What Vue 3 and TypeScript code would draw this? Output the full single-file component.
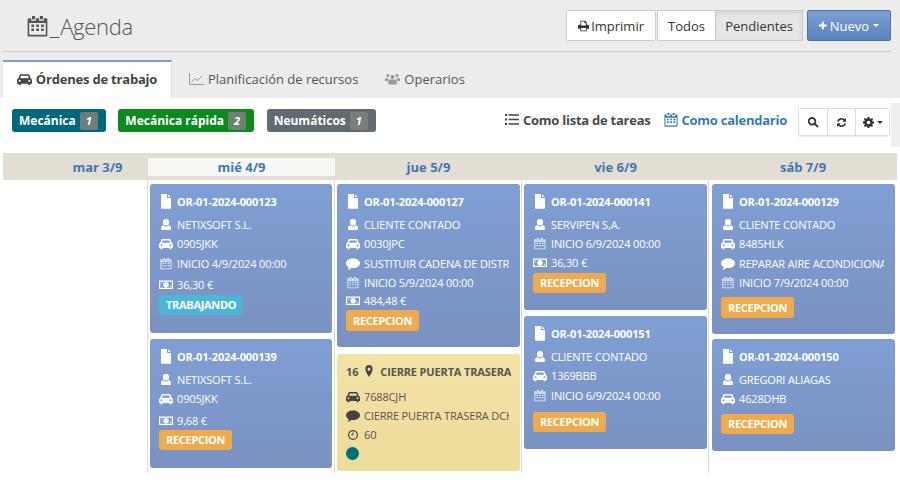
<script setup lang="ts">
type Line = { icon: string; text: string; gap?: number };
type Card = { id: string; h: number; lines: Line[]; state: string; stateTop?: number; tall?: boolean };
const icons: Record<string, string> = {
  user: 'M6 1a3 3 0 0 1 3 3.2A3 3 0 0 1 6 7.5a3 3 0 0 1-3-3.3A3 3 0 0 1 6 1zM3.2 7.2C4 8 5 8.400 6 8.400S8 8 8.800 7.200C10.400 7.400 11 8.800 11 10.500 11 11.500 10.300 12 9.500 12h-7C1.700 12 1 11.500 1 10.500 1 8.800 1.600 7.400 3.200 7.200z',
  car: 'M3.500 2h7c.6 0 1 .3 1.200.9L12.800 6c.7.3 1.200 1 1.200 1.800V11h-1.500v1.200h-2V11h-7v1.200h-2V11H0V7.800C0 7 .5 6.300 1.200 6L2.300 2.900C2.500 2.300 2.900 2 3.500 2zM3.700 3.400 3 5.800h8l-.7-2.400zM2.500 7.200a1 1 0 1 0 0 2 1 1 0 0 0 0-2zM11.500 7.200a1 1 0 1 0 0 2 1 1 0 0 0 0-2z',
  cal: 'M3 0h2v2H3zM8 0h2v2H8zM1 1.500h1.500V3h3V1.500h2V3h3V1.500H12a.8.8 0 0 1 .8.8v10a.8.8 0 0 1-.8.8H1a.8.8 0 0 1-.8-.8v-10a.8.8 0 0 1 .8-.8zM1.200 4.500V12h10.600V4.500zM2.600 5.500h1.700v1.500H2.600zM5.700 5.500h1.700v1.500H5.700zM8.800 5.500h1.700v1.500H8.800zM2.600 8h1.700v1.500H2.600zM5.700 8h1.700v1.500H5.700zM8.800 8h1.700v1.500H8.800z',
  money: 'M0 2.500h14v8.500H0zM1.200 3.700v6.100h11.600V3.700zM7 4a2.700 2.700 0 1 1 0 5.500A2.700 2.700 0 0 1 7 4zM2 4.700h1.600L2 6.200zM12 8.800h-1.600l1.600-1.500z',
  chat: 'M7 1.500c3.900 0 7 2.100 7 4.800s-3.100 4.800-7 4.800c-.6 0-1.200-.1-1.800-.2C4.200 11.900 3 12.500 1.500 12.800c.7-.8 1.200-1.600 1.300-2.500C1.100 9.400 0 8 0 6.300 0 3.600 3.100 1.500 7 1.500z',
  clock: 'M7 1a6 6 0 1 1 0 12A6 6 0 0 1 7 1zM7 2.500a4.500 4.500 0 1 0 0 9 4.500 4.500 0 0 0 0-9zM6.300 4h1.200v3.300H4.800V6.200h1.500z',
};
const boxes: Record<string, string> = {
  user: '-1 0 14 14',
  car: '0 0 14 14',
  cal: '-1.400 -1 16 16',
  money: '0 0 14 14',
  chat: '0 0 14 14',
  clock: '-1.400 -1.400 16.800 16.800',
};
const doc = 'M1 0h6v4h4v10a.7.7 0 0 1-.7.7H1.700A.7.7 0 0 1 1 14zM8 .3 10.700 3H8z';
const cols: Card[][] = [
  [],
  [
    { id: 'OR-01-2024-000123', h: 149, state: 'TRABAJANDO', stateTop: 1, lines: [
      { icon: 'user', text: 'NETIXSOFT S.L.' }, { icon: 'car', text: '0905JKK' },
      { icon: 'cal', text: 'INICIO 4/9/2024 00:00', gap: 1 }, { icon: 'money', text: '36,30 €', gap: 2 } ] },
    { id: 'OR-01-2024-000139', h: 129, state: 'RECEPCION', lines: [
      { icon: 'user', text: 'NETIXSOFT S.L.' }, { icon: 'car', text: '0905JKK' },
      { icon: 'money', text: '9,68 €', gap: 3 } ] },
  ],
  [
    { id: 'OR-01-2024-000127', h: 163, state: 'RECEPCION', tall: true, lines: [
      { icon: 'user', text: 'CLIENTE CONTADO' }, { icon: 'car', text: '0030JPC' },
      { icon: 'chat', text: 'SUSTITUIR CADENA DE DISTRIBUCIÓN', gap: 1 },
      { icon: 'cal', text: 'INICIO 5/9/2024 00:00' }, { icon: 'money', text: '484,48 €', gap: -1 } ] },
  ],
  [
    { id: 'OR-01-2024-000141', h: 126, state: 'RECEPCION', stateTop: 1, lines: [
      { icon: 'user', text: 'SERVIPEN S,A.' }, { icon: 'cal', text: 'INICIO 6/9/2024 00:00' },
      { icon: 'money', text: '36,30 €' } ] },
    { id: 'OR-01-2024-000151', h: 133, state: 'RECEPCION', lines: [
      { icon: 'user', text: 'CLIENTE CONTADO' }, { icon: 'car', text: '1369BBB' },
      { icon: 'cal', text: 'INICIO 6/9/2024 00:00', gap: 1 } ], stateTop: 7 },
  ],
  [
    { id: 'OR-01-2024-000129', h: 150, state: 'RECEPCION', tall: true, lines: [
      { icon: 'user', text: 'CLIENTE CONTADO' }, { icon: 'car', text: '8485HLK' },
      { icon: 'chat', text: 'REPARAR AIRE ACONDICIONADO', gap: 1 },
      { icon: 'cal', text: 'INICIO 7/9/2024 00:00' } ], stateTop: 5 },
    { id: 'OR-01-2024-000150', h: 112, state: 'RECEPCION', lines: [
      { icon: 'user', text: 'GREGORI ALIAGAS' }, { icon: 'car', text: '4628DHB' } ], stateTop: 6 },
  ],
];
const days = ['mar 3/9', 'mié 4/9', 'jue 5/9', 'vie 6/9', 'sáb 7/9'];
const noteLines: Line[] = [
  { icon: 'car', text: '7688CJH' },
  { icon: 'chat', text: 'CIERRE PUERTA TRASERA DCHA' },
  { icon: 'clock', text: '60' },
];
</script>

<template>
  <div class="page">
    <header class="head">
      <h1 class="title">
        <svg class="title-ico" width="21" height="21" viewBox="0 0 13 13.400"><path fill="#555" fill-rule="evenodd" :d="icons.cal" /></svg>
        <span>_ Agenda</span>
      </h1>
      <div class="actions">
        <button class="btn print">
          <svg width="13" height="12" viewBox="0 0 14 13"><path fill="#333" fill-rule="evenodd" d="M3 0h6l2 2v3h1.500c.8 0 1.500.7 1.500 1.500V10h-3v3H3v-3H0V6.500C0 5.700.7 5 1.500 5H3zM4 1v5h6V3H8V1zM4 9v3h6V9z" /></svg>
          Imprimir
        </button>
        <div class="group">
          <button class="btn">Todos</button>
          <button class="btn active">Pendientes</button>
        </div>
        <button class="btn new">
          <svg width="11" height="11" viewBox="0 0 11 11"><path fill="#fff" d="M4 0h3v4h4v3H7v4H4V7H0V4h4z" /></svg>
          Nuevo <i class="caret"></i>
        </button>
      </div>
    </header>

    <nav class="tabs">
      <a class="tab current">
        <svg width="15" height="14" viewBox="0 0 14 13"><path fill="#444" fill-rule="evenodd" :d="icons.car" /></svg>
        Órdenes de trabajo
      </a>
      <a class="tab plan">
        <svg width="15" height="12" viewBox="0 0 15 12"><path fill="none" stroke="#999" d="M.5 0v11.500H15M2.500 9 6 5.500l2.500 2L13 3" /></svg>
        Planificación de recursos
      </a>
      <a class="tab ops">
        <svg width="15" height="12" viewBox="0 0 15 12"><path fill="#999" d="M7.500 2a2 2 0 1 1 0 4 2 2 0 0 1 0-4zM3 1a1.600 1.600 0 1 1 0 3.200A1.600 1.600 0 0 1 3 1zM12 1a1.600 1.600 0 1 1 0 3.200A1.600 1.600 0 0 1 12 1zM4.500 6.500h6c.8 0 1.200.7 1.200 1.500v3.500H3.300V8c0-.8.400-1.500 1.200-1.500zM0 5.200h3.500L2.600 8H0zM11.500 5.200H15V8h-2.600z" /></svg>
        Operarios
      </a>
    </nav>

    <section class="panel">
      <div class="toolbar">
        <div class="labels">
          <span class="lab teal">Mecánica <em>1</em></span>
          <span class="lab green">Mecánica rápida <em>2</em></span>
          <span class="lab grey">Neumáticos <em>1</em></span>
        </div>
        <div class="views">
          <a class="view dark">
            <svg width="14" height="11" viewBox="0 0 14 11"><path fill="#444" d="M0 0h2v2H0zM3.500 .2H14v1.600H3.500zM0 4.500h2v2H0zM3.500 4.700H14v1.600H3.500zM0 9h2v2H0zM3.500 9.200H14v1.600H3.500z" /></svg>
            Como lista de tareas
          </a>
          <a class="view blue">
            <svg width="14" height="14" viewBox="0 0 13 13.400"><path fill="#337ab7" fill-rule="evenodd" :d="icons.cal" /></svg>
            Como calendario
          </a>
          <div class="tools">
            <button class="tool">
              <svg width="11" height="11" viewBox="0 0 11 11"><path fill="none" stroke="#333" stroke-width="1.800" d="M7.300 4.300a3.300 3.300 0 1 1-6.600 0 3.300 3.300 0 0 1 6.600 0zM6.500 6.500 10 10" /></svg>
            </button>
            <button class="tool">
              <svg width="11" height="11" viewBox="0 0 11 11"><path fill="#333" d="M5.500 1c1.200 0 2.300.5 3 1.300L10 1v3.800H6.200l1.300-1.400A3 3 0 0 0 2.700 4.500H1C1.400 2.500 3.300 1 5.500 1zM1 6.200h3.800L3.500 7.600a3 3 0 0 0 4.800-1.100H10C9.600 8.500 7.700 10 5.500 10c-1.200 0-2.300-.5-3-1.300L1 10z" /></svg>
            </button>
            <button class="tool gear">
              <svg width="11" height="11" viewBox="0 0 12 12"><path fill="#333" fill-rule="evenodd" d="M5 0h2l.3 1.700 1 .4L9.800 1l1.300 1.300L10 3.700l.4 1L12 5v2l-1.600.3-.4 1 1 1.400-1.300 1.300-1.400-1-1 .4L7 12H5l-.3-1.600-1-.4-1.400 1L1 9.700l1-1.400-.4-1L0 7V5l1.600-.3.400-1L1 2.300 2.300 1l1.400 1 1-.4zM6 4a2 2 0 1 0 0 4 2 2 0 0 0 0-4z" /></svg>
              <i class="caret dark-caret"></i>
            </button>
          </div>
        </div>
        <i class="strip"></i>
      </div>

      <div class="days">
        <div v-for="(d, i) in days" :key="d" class="day" :class="{ today: i === 1, first: i === 0 }">{{ d }}</div>
      </div>

      <div class="board">
        <div v-for="(col, ci) in cols" :key="ci" class="col">
          <article v-for="c in col" :key="c.id" class="card" :style="{ height: c.h + 'px' }">
            <div class="c-id">
              <svg width="12" height="15" viewBox="0 0 12 15"><path fill="#fff" fill-rule="evenodd" :d="doc" /></svg>
              <span>{{ c.id }}</span>
            </div>
            <div v-for="l in c.lines" :key="l.text" class="line" :style="{ marginTop: (l.gap || 0) + 'px' }">
              <svg width="14" height="14" :viewBox="boxes[l.icon]"><path fill="#fff" fill-rule="evenodd" :fill-opacity="l.icon === 'cal' ? 0.85 : 1" :d="icons[l.icon]" /></svg>
              <span>{{ l.text }}</span>
            </div>
            <span class="state" :class="[c.state === 'TRABAJANDO' ? 'work' : 'rec', { tall: c.tall }]" :style="{ marginTop: (c.stateTop || 0) + 'px' }">{{ c.state }}</span>
          </article>
          <article v-if="ci === 2" class="note">
            <div class="n-title">
              <span>16</span>
              <svg width="8" height="12" viewBox="0 0 10 13" preserveAspectRatio="none"><path fill="#444" fill-rule="evenodd" d="M5 0a4.500 4.500 0 0 1 4.500 4.500C9.500 7 6.500 10.500 5 13 3.500 10.500.5 7 .5 4.500A4.500 4.500 0 0 1 5 0zM5 2.800a1.800 1.800 0 1 0 0 3.600 1.800 1.800 0 0 0 0-3.600z" /></svg>
              <span>CIERRE PUERTA TRASERA</span>
            </div>
            <div v-for="l in noteLines" :key="l.text" class="line" :style="{ marginTop: (l.gap || 0) + 'px' }">
              <svg width="14" height="14" :viewBox="boxes[l.icon]"><path fill="#444" fill-rule="evenodd" :d="icons[l.icon]" /></svg>
              <span>{{ l.text }}</span>
            </div>
            <i class="dot"></i>
          </article>
        </div>
      </div>
    </section>
  </div>
</template>

<style>
html, body { margin: 0; background: #fff; }
</style>

<style scoped>
.page {
  width: 900px;
  height: 500px;
  overflow: hidden;
  font-family: "Open Sans", "Liberation Sans", sans-serif;
  font-size: 13px;
  color: #555;
  background: linear-gradient(#ececec 98px, #fff 98px);
}
.head {
  height: 52px;
  margin: 0 9px 0 3px;
  box-sizing: border-box;
  border-bottom: 1px solid #ccc;
  display: flex;
  justify-content: space-between;
  padding: 10px 0 0 24px;
}
.title {
  margin: 0;
  display: flex;
  align-items: center;
  height: 31px;
  gap: 2px;
  font-weight: 300;
  font-size: 22px;
  color: #555;
  letter-spacing: -0.3px;
  word-spacing: -4px;
}
.title-ico { margin-top: 2px; }
.actions { display: flex; align-items: flex-start; gap: 1px; }
.btn {
  height: 31px;
  box-sizing: border-box;
  font: inherit;
  font-size: 13px;
  color: #333;
  background: #fff;
  border: 1px solid #ccc;
  padding: 0 11px;
  border-radius: 2px;
  display: inline-flex;
  align-items: center;
  gap: 2px;
}
.print { width: 90px; justify-content: center; }
.group { display: flex; }
.group .btn { border-radius: 0; width: 59px; justify-content: center; }
.group .btn.active {
  width: 88px;
  margin-left: -1px;
  background: #e6e6e6;
  box-shadow: inset 0 2px 4px rgba(0,0,0,.08);
}
.new {
  margin-left: 3px;
  width: 84px;
  justify-content: flex-start;
  gap: 3px;
  color: #fff;
  background: linear-gradient(#7b9fd2, #5a84bd);
  border-color: #4a74ad;
}
.caret {
  width: 0; height: 0;
  margin-left: 1px;
  border-left: 3px solid transparent;
  border-right: 3px solid transparent;
  border-top: 3px solid #fff;
}
.dark-caret { border-top-color: #333; }
.tabs {
  display: flex;
  height: 46px;
  box-sizing: border-box;
  padding: 8px 0 0 3px;
}
.tab {
  display: flex;
  align-items: center;
  gap: 4px;
  height: 38px;
  box-sizing: border-box;
  font-size: 13px;
  color: #555;
}
.current {
  width: 169px;
  justify-content: center;
  background: #fff;
  border-top: 2px solid #7e9bcc;
  border-right: 1px solid #ddd;
  padding-bottom: 2px;
  font-weight: 700;
  color: #444;
  letter-spacing: -0.2px;
}
.plan { margin-left: 17px; }
.ops { margin-left: 27px; }
.panel { margin-left: 3px; }
.toolbar {
  position: relative;
  height: 55px;
  width: 888px;
  background: #fff;
  display: flex;
  justify-content: space-between;
  box-sizing: border-box;
  padding: 11px 1px 0 9px;
}
.strip {
  position: absolute;
  left: 888px;
  top: 5px;
  width: 9px;
  height: 44px;
  background: #efefef;
}
.labels { display: flex; gap: 12.5px; align-items: flex-start; }
.lab {
  height: 23px;
  box-sizing: border-box;
  padding: 0 8px 0 7px;
  border-radius: 3px;
  color: #fff;
  font-weight: 700;
  font-size: 12px;
  display: flex;
  align-items: center;
  gap: 4px;
}
.lab em {
  background: rgba(128,128,128,.85);
  font-size: 11px;
  padding: 0 6px;
  height: 18px;
  line-height: 18px;
  border-radius: 2px;
}
.teal { background: #00687a; }
.green { background: #0b8a1e; }
.grey { background: #5f6b6e; }
.views { display: flex; align-items: flex-start; }
.view {
  display: flex;
  align-items: center;
  gap: 4px;
  font-weight: 700;
  font-size: 13px;
  height: 21px;
  letter-spacing: -0.25px;
}
.dark { color: #4a4a4a; }
.blue { color: #337ab7; margin-left: 13px; }
.tools {
  display: flex;
  margin-left: 11px;
  margin-top: -1px;
  height: 28px;
  border: 1px solid #ddd;
  border-radius: 2px;
  box-shadow: 0 1px 1px rgba(0,0,0,.08);
  box-sizing: border-box;
}
.tool {
  width: 28px;
  background: #fff;
  border: 0;
  border-left: 1px solid #ddd;
  padding: 0;
  display: flex;
  align-items: center;
  justify-content: center;
  gap: 2px;
}
.tool:first-child { border-left: 0; }
.gear { width: 34px; }
.days {
  width: 894px;
  height: 27px;
  background: #e2ded4;
  display: grid;
  grid-template-columns: 145px 187px 187px 187px 188px;
  box-sizing: border-box;
  padding-top: 5px;
}
.day {
  height: 18px;
  text-align: center;
  font-weight: 700;
  font-size: 13px;
  line-height: 18px;
  color: #3f78b0;
}
.first { padding-left: 44px; }
.today { background: #f7f7f5; }
.board {
  width: 894px;
  height: 293px;
  display: grid;
  grid-template-columns: 145px 187px 187px 187px 188px;
  background: #fff;
}
.col {
  box-sizing: border-box;
  border-right: 1px solid #ddd;
  padding: 4px 2px 0 2px;
  display: flex;
  flex-direction: column;
  gap: 6px;
}
.col:nth-child(3), .col:nth-child(4) { padding-right: 1px; }
.col:nth-child(3) { gap: 7px; }
.col:last-child { border-right: 0; padding-left: 3px; gap: 5px; }
.card {
  box-sizing: border-box;
  border-radius: 3px;
  padding: 8px 9px 0;
  background: linear-gradient(#7f9fd4, #7a92c2);
  color: #fff;
  display: flex;
  flex-direction: column;
  align-items: flex-start;
  font-size: 11px;
  letter-spacing: -0.15px;
  flex: none;
}
.c-id {
  display: flex;
  align-items: center;
  gap: 5px;
  height: 18px;
  margin-bottom: 5px;
  font-weight: 700;
  font-size: 11px;
  padding-left: 1px;
}
.line {
  display: flex;
  align-items: center;
  gap: 4px;
  height: 19px;
  width: 163px;
  white-space: nowrap;
  overflow: hidden;
  flex: none;
}
.line svg { flex: none; }
.state {
  height: 20px;
  line-height: 20px;
  padding: 0 7px;
  border-radius: 3px;
  font-weight: 700;
  font-size: 11px;
  letter-spacing: -0.3px;
}
.tall { height: 21px; line-height: 21px; }
.work { background: #4db6d8; }
.rec { background: #eeaa4c; }
.note {
  height: 117px;
  box-sizing: border-box;
  border-radius: 3px;
  background: linear-gradient(#f2e2a4, #eedc9c);
  color: #555;
  padding: 8px 9px 0;
  font-size: 11px;
  letter-spacing: -0.15px;
  flex: none;
}
.n-title {
  display: flex;
  align-items: center;
  gap: 7px;
  height: 18px;
  margin-bottom: 7px;
  font-weight: 700;
  font-size: 11px;
  white-space: nowrap;
  overflow: hidden;
}
.n-title svg { flex: none; }
.dot {
  display: block;
  width: 13px;
  height: 13px;
  border-radius: 50%;
  background: #007078;
  margin-top: 3px;
}
</style>
